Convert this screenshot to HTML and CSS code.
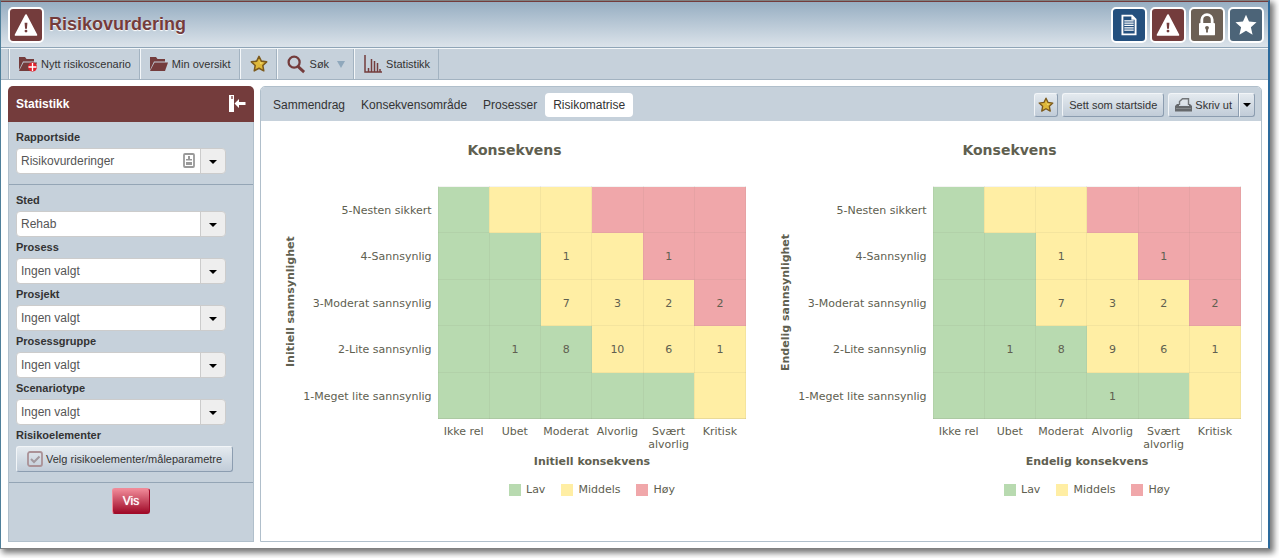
FILE: index.html
```html
<!DOCTYPE html>
<html lang="no">
<head>
<meta charset="utf-8">
<title>Risikovurdering</title>
<link rel="stylesheet" href="styles.css">
</head>
<body>
<svg class="defs" aria-hidden="true">
  <symbol id="i-warning" viewBox="0 0 34 34"><path d="M17 6.500 28 27.500H6Z" fill="#fff" stroke="#fff" stroke-width="2" stroke-linejoin="round"/><path d="M15.500 14.500h3l-.5 6.500h-2z"/><circle cx="17" cy="23.500" r="1.500"/></symbol>
  <symbol id="i-star" viewBox="0 0 20 20"><path d="m10 1.500 2.600 5.300 5.900.8-4.300 4 1.100 6L10 14.700l-5.300 2.900 1.100-6-4.300-4 5.900-.8Z" fill="#deb83a" stroke="#7c5a1c" stroke-width="1.700" stroke-linejoin="round"/><path d="m10 5 1.500 3.300 3.500.3-3.500 1.500z" fill="#f5df78"/></symbol>
  <symbol id="i-folder" viewBox="0 0 18 16"><path d="M0 14V1h6l1.500 2H15v2.500H4z"/><path d="M4.500 6.500H18L15 15H0z"/></symbol>
</svg>
<div class="window">
  <header class="header">
    <span class="app-icon app-maroon"><svg><use href="#i-warning"/></svg></span>
    <h1>Risikovurdering</h1>
    <nav class="apps" aria-label="Moduler">
      <a href="#" class="app-icon app-blue" aria-label="Dokumenter"><svg viewBox="0 0 34 34"><path d="M9 6h11.500L25 10.500V28H9z" fill="#fff"/><path d="M11 8h8.500v3.500H23V26H11z"/><path d="M12 12.500h10M12 15h10M12 17.500h10M12 20h10M12 22.500h10" stroke="#fff" stroke-width="1.300"/></svg></a>
      <a href="#" class="app-icon app-maroon" aria-label="Risiko"><svg><use href="#i-warning"/></svg></a>
      <a href="#" class="app-icon app-brown" aria-label="Tilgang"><svg viewBox="0 0 34 34"><path d="M11.500 16v-4.500a5.500 5.500 0 0 1 11 0V16" fill="none" stroke="#fff" stroke-width="3"/><rect x="8.500" y="15" width="17" height="13" rx="1" fill="#fff"/><circle cx="17" cy="20" r="2"/><path d="M16 20h2v5h-2z"/></svg></a>
      <a href="#" class="app-icon app-slate" aria-label="Favoritter"><svg viewBox="0 0 34 34"><path d="m17 6 3.200 7.400 8 .8-6 5.300 1.800 7.900-7-4.200-7 4.200 1.800-7.900-6-5.300 8-.8Z" fill="#fff"/></svg></a>
    </nav>
  </header>

  <div class="toolbar">
    <button class="tool"><svg class="ic-folder" viewBox="0 0 18 16"><use href="#i-folder"/><circle cx="13.500" cy="11" r="4.500" fill="#e0202c"/><path d="M13.500 7v8M9.500 11h8" stroke="#fff" stroke-width="1.300"/></svg>Nytt risikoscenario</button>
    <button class="tool"><svg class="ic-folder"><use href="#i-folder"/></svg>Min oversikt</button>
    <button class="tool" aria-label="Favoritter"><svg class="ic-star"><use href="#i-star"/></svg></button>
    <button class="tool"><svg class="ic-search" viewBox="0 0 20 20"><circle cx="7.500" cy="7.500" r="5.800" fill="none" stroke="#743c3c" stroke-width="2.400"/><path d="m11.500 12 6.500 6" stroke="#743c3c" stroke-width="3"/></svg>Søk<span class="caret-soft"></span></button>
    <button class="tool"><svg class="ic-chart" viewBox="0 0 18 18"><path d="M1 0v17h17M4.500 17v-4M7.500 17V4M10.500 17V6M13.500 17V8M16 17v-3" fill="none" stroke="#743c3c" stroke-width="1.500"/></svg>Statistikk</button>
  </div>

  <div class="content">
    <aside class="sidebar">
      <div class="side-head"><h2>Statistikk</h2>
        <button class="collapse" aria-label="Skjul panel"><svg viewBox="0 0 17 18"><path d="M0 0h5v17H0z" fill="#fff"/><path d="M2 1h2v3H2z" fill="#a88080"/><path d="M5.500 8.500 10 4v3h6.500v3H10v3z" fill="#fff"/></svg></button>
      </div>
      <form class="side-body">
        <div class="group">
          <label for="rapport">Rapportside</label>
          <div class="select"><select id="rapport"><option>Risikovurderinger</option></select><svg class="badge" viewBox="0 0 12 15"><rect x="1" y="1" width="10" height="13" rx="1" fill="#fff" stroke="#999" stroke-width="1.800"/><path d="M5 3h2v3h2v1.500H3V6h2zM3 9h6v3H3z" fill="#999"/></svg></div>
        </div>
        <div class="group">
          <label for="sted">Sted</label>
          <div class="select"><select id="sted"><option>Rehab</option></select></div>
          <label for="prosess">Prosess</label>
          <div class="select"><select id="prosess"><option>Ingen valgt</option></select></div>
          <label for="prosjekt">Prosjekt</label>
          <div class="select"><select id="prosjekt"><option>Ingen valgt</option></select></div>
          <label for="gruppe">Prosessgruppe</label>
          <div class="select"><select id="gruppe"><option>Ingen valgt</option></select></div>
          <label for="type">Scenariotype</label>
          <div class="select"><select id="type"><option>Ingen valgt</option></select></div>
          <label for="velg">Risikoelementer</label>
          <button type="button" id="velg" class="btn btn-pick"><svg viewBox="0 0 16 16"><rect x="1" y="1" width="14" height="14" rx="2" fill="none" stroke="#ab9297" stroke-width="1.800"/><path d="m4 8 3 3 5.500-5.500" fill="none" stroke="#a2999f" stroke-width="2"/></svg>Velg risikoelementer/måleparametre</button>
        </div>
        <div class="submit"><button type="button" class="btn-vis">Vis</button></div>
      </form>
    </aside>

    <main class="main">
      <div class="tabbar">
        <nav class="tabs">
          <a href="#">Sammendrag</a><a href="#">Konsekvensområde</a><a href="#">Prosesser</a><a href="#" class="active" aria-current="page">Risikomatrise</a>
        </nav>
        <div class="actions">
          <button class="btn btn-star" aria-label="Favoritt"><svg><use href="#i-star"/></svg></button>
          <button class="btn">Sett som startside</button>
          <div class="split">
            <button class="btn btn-print"><svg viewBox="0 0 17 15"><path d="M4.500 7V3.500L7.500.7h6V7" fill="#dde3e9" stroke="#737679" stroke-width="1.400"/><path d="M2 6h2v2h10V6h1l2 2v5.500H0V8z" fill="#66696c"/><path d="M1 10.500h15" stroke="#85898c"/></svg>Skriv ut</button><button class="btn btn-more" aria-label="Flere valg"><span class="caret"></span></button>
          </div>
        </div>
      </div>

      <div class="charts">
        <section class="chart">
          <h3>Konsekvens</h3>
          <div class="plot">
            <div class="y-title">Initiell sannsynlighet</div>
            <table>
              <colgroup><col class="label-col"><col><col><col><col><col><col></colgroup>
              <tbody>
                <tr><th scope="row">5-Nesten sikkert</th><td class="l"></td><td class="m"></td><td class="m"></td><td class="h"></td><td class="h"></td><td class="h"></td></tr>
                <tr><th scope="row">4-Sannsynlig</th><td class="l"></td><td class="l"></td><td class="m">1</td><td class="m"></td><td class="h">1</td><td class="h"></td></tr>
                <tr><th scope="row">3-Moderat sannsynlig</th><td class="l"></td><td class="l"></td><td class="m">7</td><td class="m">3</td><td class="m">2</td><td class="h">2</td></tr>
                <tr><th scope="row">2-Lite sannsynlig</th><td class="l"></td><td class="l">1</td><td class="l">8</td><td class="m">10</td><td class="m">6</td><td class="m">1</td></tr>
                <tr><th scope="row">1-Meget lite sannsynlig</th><td class="l"></td><td class="l"></td><td class="l"></td><td class="l"></td><td class="l"></td><td class="m"></td></tr>
              </tbody>
              <tfoot><tr><td></td><th scope="col">Ikke rel</th><th scope="col">Ubet</th><th scope="col">Moderat</th><th scope="col">Alvorlig</th><th scope="col">Svært alvorlig</th><th scope="col">Kritisk</th></tr></tfoot>
            </table>
          </div>
          <div class="x-title">Initiell konsekvens</div>
          <ul class="legend"><li><i class="l"></i>Lav</li><li><i class="m"></i>Middels</li><li><i class="h"></i>Høy</li></ul>
        </section>
        <section class="chart">
          <h3>Konsekvens</h3>
          <div class="plot">
            <div class="y-title">Endelig sannsynlighet</div>
            <table>
              <colgroup><col class="label-col"><col><col><col><col><col><col></colgroup>
              <tbody>
                <tr><th scope="row">5-Nesten sikkert</th><td class="l"></td><td class="m"></td><td class="m"></td><td class="h"></td><td class="h"></td><td class="h"></td></tr>
                <tr><th scope="row">4-Sannsynlig</th><td class="l"></td><td class="l"></td><td class="m">1</td><td class="m"></td><td class="h">1</td><td class="h"></td></tr>
                <tr><th scope="row">3-Moderat sannsynlig</th><td class="l"></td><td class="l"></td><td class="m">7</td><td class="m">3</td><td class="m">2</td><td class="h">2</td></tr>
                <tr><th scope="row">2-Lite sannsynlig</th><td class="l"></td><td class="l">1</td><td class="l">8</td><td class="m">9</td><td class="m">6</td><td class="m">1</td></tr>
                <tr><th scope="row">1-Meget lite sannsynlig</th><td class="l"></td><td class="l"></td><td class="l"></td><td class="l">1</td><td class="l"></td><td class="m"></td></tr>
              </tbody>
              <tfoot><tr><td></td><th scope="col">Ikke rel</th><th scope="col">Ubet</th><th scope="col">Moderat</th><th scope="col">Alvorlig</th><th scope="col">Svært alvorlig</th><th scope="col">Kritisk</th></tr></tfoot>
            </table>
          </div>
          <div class="x-title">Endelig konsekvens</div>
          <ul class="legend"><li><i class="l"></i>Lav</li><li><i class="m"></i>Middels</li><li><i class="h"></i>Høy</li></ul>
        </section>
      </div>
    </main>
  </div>
</div>
</body>
</html>
```

FILE: styles.css
```css
* { box-sizing: border-box; }
body { margin: 0; background: #fff; font: 11px/14px "Liberation Sans", Arial, sans-serif; color: #333; }
button, select { font: inherit; color: inherit; margin: 0; cursor: pointer; }
h1, h2, h3, ul { margin: 0; padding: 0; }
a { color: inherit; text-decoration: none; }
.defs { position: absolute; width: 0; height: 0; }

.window {
  display: flex; flex-direction: column;
  min-height: calc(100vh - 9px); margin: 0 9px 9px 0;
  border: 1px solid #808080; border-right: 2px solid #2c6a9c; border-left-color: #4e7f9a;
  background: #fff; box-shadow: 3px 3px 6px 1px #777;
}

.header {
  display: flex; align-items: center; height: 47px; padding: 0 4px 0 7px;
  border-top: 1px solid #743c3c; border-bottom: 1px solid #8fa5b7;
  background: linear-gradient(#97aec2, #dbe3ea);
}
.header h1 { flex: 1; padding: 0 0 2px 5px; font-size: 18px; line-height: 22px; color: #743c3c; text-shadow: 0 1px 1px #fff; }
.apps { display: flex; gap: 3px; }
.app-icon { display: block; width: 36px; height: 36px; border: 2px solid #fff; border-radius: 5px; }
.app-icon svg { display: block; width: 32px; height: 32px; }
.app-maroon { background: #743c3c; fill: #743c3c; }
.app-blue { background: #24507e; fill: #24507e; }
.app-brown { background: #6c6055; fill: #6c6055; }
.app-slate { background: #4c6478; fill: #4c6478; }

.toolbar { display: flex; height: 32px; padding-left: 7px; border-top: 1px solid #f4f7f9; border-bottom: 1px solid #a3b3c1; background: #c6d1db; }
.toolbar::before { content: ""; border-left: 1px solid #a3b3c1; }
.tool { display: flex; align-items: center; gap: 4px; padding: 0 8px 0 9px; border: 0; border-left: 1px solid #f4f7f9; border-right: 1px solid #a3b3c1; background: none; }
.tool svg { fill: #743c3c; }
.ic-folder { width: 18px; height: 16px; }
.ic-star { width: 18px; height: 18px; }
.ic-search { width: 19px; height: 19px; }
.ic-chart { width: 18px; height: 18px; }
.caret-soft { margin-left: 4px; border: 4px solid transparent; border-top: 7px solid #8fa8bc; border-bottom: 0; }

.content { display: flex; flex: 1; gap: 6px; padding: 6px 6px 6px 7px; }

.sidebar { display: flex; flex-direction: column; flex: 0 0 246px; }
.side-head { display: flex; align-items: center; justify-content: space-between; height: 36px; padding: 0 8px; border-radius: 5px 5px 0 0; background: #743c3c; color: #fff; }
.side-head h2 { font-size: 12px; line-height: 16px; }
.collapse { width: 17px; height: 18px; padding: 0; border: 0; background: none; }
.collapse svg { display: block; width: 17px; height: 18px; }
.side-body { flex: 1; border: 1px solid #b0bfcb; border-top: 0; background: #c6d1db; }
.group { padding: 5px 7px 10px; border-bottom: 1px solid #94a5b5; }
.group label { display: block; height: 21px; padding-top: 3px; font-weight: bold; }
.select { position: relative; width: 210px; }
.select select {
  display: block; width: 100%; height: 26px; padding: 0 30px 0 4px;
  appearance: none; border: 1px solid #ccc; border-radius: 4px; font-size: 12px; color: #555;
  background: linear-gradient(to right, #ccc 1px, #eee 1px) right / 25px 100% no-repeat #fff;
}
.select::after, .caret { border: 4px solid transparent; border-top-color: #000; border-bottom: 0; }
.select::after { content: ""; position: absolute; right: 9px; top: 12px; pointer-events: none; }
.badge { position: absolute; right: 31px; top: 5px; width: 12px; height: 15px; }

.btn {
  display: flex; align-items: center; justify-content: center; gap: 3px; height: 26px; padding: 0 6px;
  border: 1px solid; border-color: #f2f5f8 #8c9db0 #8c9db0 #f2f5f8; border-radius: 3px;
  background: linear-gradient(#e4eaef, #c1ccd8);
}
.btn-pick { padding: 0 10px; }
.btn-pick svg { width: 16px; height: 16px; }
.submit { display: flex; justify-content: center; padding-top: 5px; }
.btn-vis { height: 26px; padding: 0 10px; border: 1px solid; border-color: #f08a98 #a00a28 #a00a28 #f08a98; border-radius: 3px; background: linear-gradient(#f08a98, #a00a28); color: #fff; font-size: 12px; text-shadow: 0 0 1px #fff; }

.main { flex: 1; min-width: 0; border: 1px solid #b0bfcb; border-radius: 5px 5px 0 0; }
.tabbar { display: flex; align-items: center; justify-content: space-between; height: 34px; padding: 2px 6px 0 4px; border-radius: 4px 4px 0 0; background: #c6d1db; }
.tabs { display: flex; font-size: 12px; }
.tabs a { padding: 5px 8px; border-radius: 4px; }
.tabs .active { background: #fff; }
.actions { display: flex; gap: 4px; }
.actions .btn { height: 24px; }
.actions .btn-star { padding: 0; width: 24px; }
.btn-star svg { width: 16px; height: 16px; }
.split { display: flex; }
.btn-print { border-radius: 3px 0 0 3px; }
.btn-print svg { width: 17px; height: 15px; }
.btn-more { width: 16px; padding: 0; border-radius: 0 3px 3px 0; }

.charts { display: flex; padding-right: 10px; font: 11px/13px "DejaVu Sans", Verdana, sans-serif; color: #606050; }
.chart { flex: 1; min-width: 0; padding: 20px 10px 0 22px; }
.chart h3 { font-size: 14px; line-height: 18px; text-align: center; color: #606050; }
.plot { display: grid; grid-template-columns: 15px minmax(0, 1fr); padding-top: 27px; }
.y-title { height: 232px; writing-mode: vertical-rl; transform: rotate(180deg); text-align: center; font-weight: bold; line-height: 15px; }
table { width: 100%; table-layout: fixed; border-collapse: collapse; }
.label-col { width: 140px; }
th { font-weight: normal; padding: 0; }
tbody tr { height: 46px; }
tbody tr:nth-child(even) { height: 47px; }
tbody th { padding: 1px 6px 0 0; text-align: right; white-space: nowrap; }
tbody td { padding: 1px 0 0; border: 1px solid rgba(96, 96, 80, .07); text-align: center; }
tfoot th { padding-top: 6px; vertical-align: top; }
.l { background: #b8dab0; }
.m { background: #ffeea4; }
.h { background: #f0a7aa; }
.x-title { padding: 3px 0 0 155px; text-align: center; font-weight: bold; line-height: 15px; }
.legend { display: flex; justify-content: center; gap: 16px; padding: 14px 0 0 155px; list-style: none; }
.legend li { display: flex; align-items: center; gap: 5px; }
.legend i { width: 12px; height: 12px; }
```
